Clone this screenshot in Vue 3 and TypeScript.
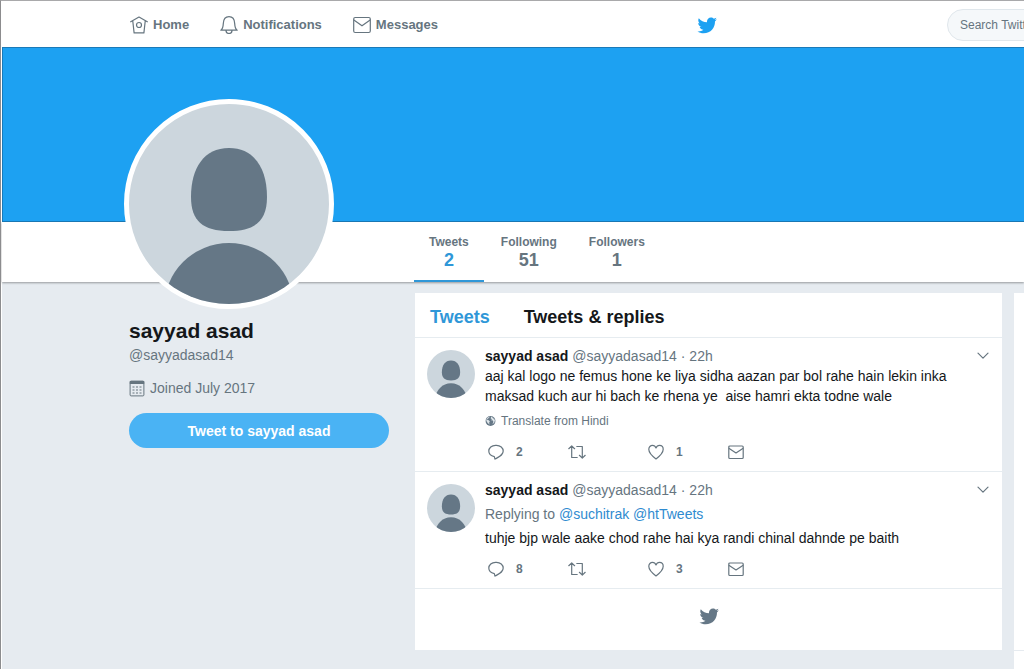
<script setup lang="ts">
import { ref } from 'vue'

interface Tweet {
  id: number
  lines: string[]
  mentions?: string[]
  translate?: boolean
  replies: number
  likes: number
}

const name = 'sayyad asad'
const handle = '@sayyadasad14'
const search = ref('')

const stats = [
  { label: 'Tweets', value: 2, active: true },
  { label: 'Following', value: 51, active: false },
  { label: 'Followers', value: 1, active: false },
]

const tweets: Tweet[] = [
  {
    id: 1,
    lines: [
      'aaj kal logo ne femus hone ke liya sidha aazan par bol rahe hain lekin inka',
      'maksad kuch aur hi bach ke rhena ye  aise hamri ekta todne wale',
    ],
    translate: true,
    replies: 2,
    likes: 1,
  },
  {
    id: 2,
    lines: ['tuhje bjp wale aake chod rahe hai kya randi chinal dahnde pe baith'],
    mentions: ['@suchitrak', '@htTweets'],
    replies: 8,
    likes: 3,
  },
]

const birdPath =
  'M23.643 4.937c-.835.37-1.732.62-2.675.733.962-.576 1.7-1.49 2.048-2.578-.9.534-1.897.922-2.958 1.13-.85-.904-2.06-1.47-3.4-1.47-2.572 0-4.658 2.086-4.658 4.66 0 .364.042.718.12 1.06-3.873-.195-7.304-2.05-9.602-4.868-.4.69-.63 1.49-.63 2.342 0 1.616.823 3.043 2.072 3.878-.764-.025-1.482-.234-2.11-.583v.06c0 2.257 1.605 4.14 3.737 4.568-.392.106-.803.162-1.227.162-.3 0-.593-.028-.877-.082.593 1.85 2.313 3.198 4.352 3.234-1.595 1.25-3.604 1.995-5.786 1.995-.376 0-.747-.022-1.112-.065 2.062 1.323 4.51 2.093 7.14 2.093 8.57 0 13.255-7.098 13.255-13.254 0-.2-.005-.402-.014-.602.91-.658 1.7-1.477 2.323-2.41z'
const headPath = 'M100 44c25 0 38 20 38 49 0 24-12 34-38 34s-38-10-38-34c0-29 13-49 38-49z'
</script>

<template>
  <div class="page">
    <header class="topbar">
      <nav class="nav" aria-label="Primary">
        <a href="#" class="nav-link">
          <svg class="icon" viewBox="0 0 18 18" width="18" height="18">
            <path d="M.7 5.800 9 1.100l8.300 4.700M2.800 5.200l1.300 11.700h9.800l1.300-11.700" />
            <circle cx="9" cy="9" r="2.500" />
          </svg>
          <span>Home</span>
        </a>
        <a href="#" class="nav-link">
          <svg class="icon" viewBox="0 0 18 18" width="18" height="18">
            <path d="M.8 14.200c2.200-1.200 2.300-3 2.500-6.600C3.500 3.500 5.600.7 9 .7s5.500 2.800 5.700 6.900c.2 3.600.3 5.400 2.500 6.600zM6 14.500a3 3 0 0 0 6 0" />
          </svg>
          <span>Notifications</span>
        </a>
        <a href="#" class="nav-link">
          <svg class="icon" viewBox="0 0 18 18" width="18" height="18">
            <rect x=".7" y="1.500" width="16.600" height="15" rx="1.500" />
            <path d="m1.200 4.200 7.800 5.600 7.800-5.600" />
          </svg>
          <span>Messages</span>
        </a>
      </nav>
      <a href="#" class="brand" aria-label="Twitter">
        <svg viewBox="0.4 2.7 23.3 18.9" width="20" height="17"><path :d="birdPath" /></svg>
      </a>
      <form class="search" @submit.prevent>
        <input v-model="search" type="text" placeholder="Search Twitter" aria-label="Search Twitter" />
      </form>
    </header>

    <div class="banner"></div>

    <nav class="stats" aria-label="Profile">
      <a v-for="s in stats" :key="s.label" href="#" class="stat" :class="{ active: s.active }">
        <span class="stat-label">{{ s.label }}</span>
        <span class="stat-value">{{ s.value }}</span>
      </a>
    </nav>

    <div class="content">
      <aside class="profile">
        <div class="avatar-large">
          <svg viewBox="0 0 200 200">
            <path :d="headPath" />
            <circle cx="100" cy="204" r="65" />
          </svg>
        </div>
        <h1>{{ name }}</h1>
        <a href="#" class="profile-handle">{{ handle }}</a>
        <p class="joined">
          <svg viewBox="0 0 16 17" width="16" height="17">
            <rect x="1.100" y="1.100" width="13.800" height="14.800" rx="1" class="line" />
            <path d="M.8 1h14.400v3H.8z" class="solid" />
            <path d="M3.500 7h2M7 7h2M10.500 7h2M3.500 10h2M7 10h2M10.500 10h2M3.500 13h2M7 13h2M10.500 13h2" class="line" />
          </svg>
          <span>Joined July 2017</span>
        </p>
        <button type="button" class="tweet-to">Tweet to {{ name }}</button>
      </aside>

      <main class="timeline">
        <div class="tabs">
          <a href="#" class="tab current">Tweets</a>
          <a href="#" class="tab">Tweets &amp; replies</a>
        </div>

        <article v-for="t in tweets" :key="t.id" class="tweet">
          <div class="avatar-small">
            <svg viewBox="0 0 200 200">
              <path :d="headPath" />
              <circle cx="100" cy="204" r="65" />
            </svg>
          </div>
          <div class="tweet-body">
            <div class="tweet-head">
              <div class="byline">
                <a href="#" class="author">{{ name }}</a>
                <a href="#" class="handle">{{ handle }}</a>
                <span class="handle">· 22h</span>
              </div>
              <button type="button" class="plain" aria-label="More">
                <svg class="icon" viewBox="0 0 12 8" width="12" height="8"><path d="m1 1.200 5 5 5-5" /></svg>
              </button>
            </div>
            <p v-if="t.mentions" class="replying">
              Replying to
              <template v-for="m in t.mentions" :key="m"><a href="#">{{ m }}</a>{{ ' ' }}</template>
            </p>
            <p class="text"><span v-for="l in t.lines" :key="l">{{ l }}</span></p>
            <button v-if="t.translate" type="button" class="plain translate">
              <svg viewBox="0 0 12 12" width="11" height="12">
                <circle cx="6" cy="6" r="5.400" class="globe" />
                <path d="M5.600 1.200 3 2.300 1.300 4.500l2.300.4 1.700 1.300-.8 1.600.5 2.400-2.500-2.500-1.200-2.200M7 1l-.9 2 1.500 1-1 1.300 2 .2.500 1.500-1 2.500 2-1.500.8-3" class="land" />
              </svg>
              <span>Translate from Hindi</span>
            </button>
            <div class="actions">
              <button type="button" class="plain action" aria-label="Reply">
                <svg class="icon" viewBox="0 0 16 16" width="16" height="16">
                  <path d="M6.300 12.600C3 12.100.8 9.800.8 7.100c0-3.200 2.900-5.700 6.700-5.700h1c3.800 0 6.700 2.500 6.700 5.700 0 4-3.700 5.300-8.200 8z" />
                </svg>
                <span>{{ t.replies }}</span>
              </button>
              <button type="button" class="plain action" aria-label="Retweet">
                <svg class="icon" viewBox="0 0 18 16" width="18" height="16">
                  <path d="M.8 4.700 3.700 1.900l2.900 2.800M3.700 2.200v11.300h5.500M8.800 2.500h5.500v11.300M11.400 11.300l2.900 2.800 2.900-2.800" />
                </svg>
              </button>
              <button type="button" class="plain action" aria-label="Like">
                <svg class="icon" viewBox="0 0 16 16" width="16" height="16">
                  <path d="M8 15C4.300 12.200.8 8.900.8 5.300.8 3 2.500 1.400 4.500 1.400 6.200 1.400 7.400 2.400 8 4c.6-1.600 1.800-2.600 3.500-2.600 2 0 3.700 1.600 3.700 3.900C15.200 8.900 11.700 12.200 8 15z" />
                </svg>
                <span>{{ t.likes }}</span>
              </button>
              <button type="button" class="plain action" aria-label="Direct message">
                <svg class="icon" viewBox="0 0 16 16" width="16" height="16">
                  <rect x=".8" y="2" width="14.400" height="12.500" rx="1" />
                  <path d="M1.200 4.500 8 9l6.800-4.500" />
                </svg>
              </button>
            </div>
          </div>
        </article>

        <div class="timeline-end">
          <svg viewBox="0.4 2.7 23.3 18.9" width="20" height="17"><path :d="birdPath" /></svg>
        </div>
      </main>

      <div class="side-cards">
        <section></section>
        <section></section>
      </div>
    </div>
  </div>
</template>

<style>
body {
  margin: 0;
  background: #e6ebf0;
}
</style>

<style scoped>
.page {
  box-sizing: border-box;
  display: flex;
  flex-direction: column;
  min-height: 100vh;
  overflow: hidden;
  padding-left: 1px;
  border-top: 1px solid #a9a9ab;
  border-left: 1px solid #8c8c8e;
  background: #fff;
  color: #14171a;
  font: 14px/20px "Liberation Sans", Arial, sans-serif;
}
a {
  color: inherit;
  text-decoration: none;
}
h1,
p {
  margin: 0;
}
svg {
  display: block;
  flex: none;
}
.icon {
  fill: none;
  stroke: #66757f;
  stroke-width: 1.2;
  stroke-linejoin: round;
  stroke-linecap: round;
}
.topbar {
  box-sizing: border-box;
  display: flex;
  align-items: center;
  height: 46px;
  padding: 2px 0 0 128px;
}
.nav {
  display: flex;
  gap: 31px;
}
.nav-link {
  display: flex;
  align-items: center;
  gap: 5px;
  color: #66757f;
  font-size: 13px;
  font-weight: bold;
}
.brand {
  margin-left: auto;
  margin-right: 230px;
}
.brand svg {
  fill: #1da1f2;
}
.search {
  flex: 0 0 77px;
  min-width: 0;
}
.search input {
  box-sizing: border-box;
  width: 220px;
  height: 32px;
  padding: 0 12px;
  border: 1px solid #e0e7ec;
  border-radius: 16px;
  background: #f5f8fa;
  color: #14171a;
  font: 12px "Liberation Sans", Arial, sans-serif;
}
.search input::placeholder {
  color: #66757f;
  opacity: 1;
}
.banner {
  box-sizing: border-box;
  height: 175px;
  border: solid #1a7ab8;
  border-width: 1px 0 1px 1px;
  background: #1da1f2;
}
.stats {
  display: flex;
  gap: 2px;
  height: 60px;
  padding-left: 412px;
  position: relative;
  box-shadow: 0 1px 2px rgba(0, 0, 0, 0.35);
}
.stat {
  display: flex;
  flex-direction: column;
  align-items: center;
  padding: 11px 15px 0;
  border-bottom: 2px solid transparent;
  color: #66757f;
  font-weight: bold;
}
.stat-label {
  font-size: 12px;
  line-height: 18px;
}
.stat-value {
  font-size: 18px;
  line-height: 18px;
}
.stat.active {
  border-color: #2f97d8;
}
.stat.active .stat-value {
  color: #2f97d8;
}
.content {
  flex: 1;
  display: grid;
  grid-template-columns: 260px minmax(0, 1fr) 10px;
  padding: 11px 0 0 127px;
  background: #e6ebf0;
}
.profile {
  position: relative;
}
.avatar-large,
.avatar-small {
  overflow: hidden;
  border-radius: 50%;
  background: #ccd6dd;
  fill: #657786;
}
.avatar-large {
  width: 200px;
  height: 200px;
  margin: -194px 0 0 -5px;
  border: 5px solid #fff;
}
h1 {
  margin-top: 9px;
  font-size: 21px;
  line-height: 26px;
}
.profile-handle {
  display: block;
  margin-top: 1px;
  color: #66757f;
}
.joined {
  display: flex;
  align-items: center;
  gap: 5px;
  margin-top: 13px;
  color: #66757f;
}
.joined .line {
  fill: none;
  stroke: #66757f;
  stroke-width: 1;
}
.joined .solid {
  fill: #66757f;
}
.tweet-to {
  width: 100%;
  height: 35px;
  margin-top: 15px;
  padding: 0;
  border: 0;
  border-radius: 18px;
  background: #4ab3f4;
  color: #fff;
  font: bold 14px/20px "Liberation Sans", Arial, sans-serif;
}
.timeline {
  align-self: start;
  margin: 0 12px 0 26px;
  background: #fff;
}
.tabs {
  display: flex;
  gap: 34px;
  padding: 14px 15px 10px;
  border-bottom: 1px solid #e6ecf0;
  font-size: 18px;
  font-weight: bold;
}
.tab.current {
  color: #2f97d8;
}
.tweet {
  display: flex;
  gap: 10px;
  padding: 8px 13px 9px 12px;
  border-bottom: 1px solid #e6ecf0;
}
.avatar-small {
  flex: none;
  width: 48px;
  height: 48px;
  margin-top: 4px;
}
.tweet-body {
  flex: 1;
  min-width: 0;
}
.tweet-head {
  display: flex;
  justify-content: space-between;
}
.byline {
  display: flex;
  gap: 4px;
}
.author {
  font-weight: bold;
}
.handle {
  color: #66757f;
}
.plain {
  display: flex;
  align-items: center;
  padding: 0;
  border: 0;
  background: none;
  color: #66757f;
  font: 12px/20px "Liberation Sans", Arial, sans-serif;
}
.replying {
  margin: 4px 0;
  color: #66757f;
}
.replying a {
  color: #2f8bd0;
}
.text span {
  display: block;
  white-space: pre-wrap;
}
.translate {
  gap: 5px;
  margin-top: 5px;
}
.globe {
  fill: #657786;
}
.land {
  fill: #dfe6ea;
}
.actions {
  display: flex;
  margin-top: 11px;
  padding-left: 3px;
}
.action {
  flex: 0 0 80px;
  gap: 12px;
  height: 20px;
  font-weight: bold;
}
.timeline-end {
  display: flex;
  justify-content: center;
  padding: 19px 0 25px;
  fill: #657786;
}
.side-cards {
  display: grid;
  grid-template-rows: 357px 1fr;
  gap: 1px;
}
.side-cards section {
  background: #fff;
}
</style>
